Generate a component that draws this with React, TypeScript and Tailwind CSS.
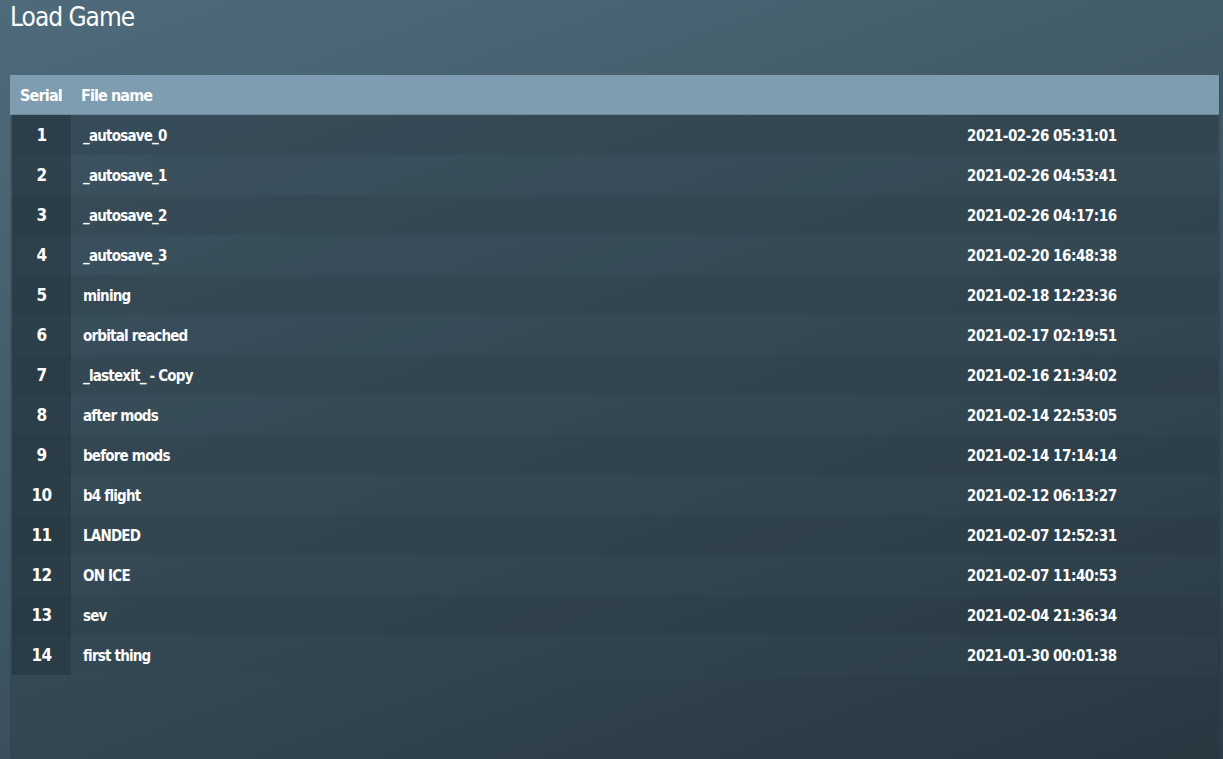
const saves = [
  ['_autosave_0', '2021-02-26 05:31:01'],
  ['_autosave_1', '2021-02-26 04:53:41'],
  ['_autosave_2', '2021-02-26 04:17:16'],
  ['_autosave_3', '2021-02-20 16:48:38'],
  ['mining', '2021-02-18 12:23:36'],
  ['orbital reached', '2021-02-17 02:19:51'],
  ['_lastexit_ - Copy', '2021-02-16 21:34:02'],
  ['after mods', '2021-02-14 22:53:05'],
  ['before mods', '2021-02-14 17:14:14'],
  ['b4 flight', '2021-02-12 06:13:27'],
  ['LANDED', '2021-02-07 12:52:31'],
  ['ON ICE', '2021-02-07 11:40:53'],
  ['sev', '2021-02-04 21:36:34'],
  ['first thing', '2021-01-30 00:01:38'],
]

const font = "font-['DejaVu_Sans_Condensed','DejaVu_Sans',sans-serif] font-stretch-condensed"

export default function App() {
  return (
    <div className={`w-[1223px] h-[759px] overflow-hidden flex flex-col bg-[linear-gradient(160deg,#4f6b7b_0%,#3f5764_50%,#2c3b45_100%)] text-white ${font}`}>
      <div className="h-[75px] px-[10px] pt-[1px]">
        <h1 className="text-[26px] leading-[32px] font-light tracking-[-1px]">Load Game</h1>
      </div>
      <div className="flex-1 mx-[10px] mr-[3px] flex flex-col bg-[#1e2c35]/25">
        <div className="h-[40px] flex items-center pt-[2px] bg-[#7f9db0] mr-[1px] border-b border-[#6c899b]">
          <div className="w-[61px] text-center text-[16px] font-bold pl-[1px] tracking-[-0.8px]">Serial</div>
          <div className="pl-[10px] text-[16px] font-bold tracking-[-0.9px]">File name</div>
        </div>
        <div className="flex flex-col px-[2px]">
          {saves.map(([name, date], i) => (
            <div key={i} className={`h-[40px] flex items-center ${i % 2 === 0 ? 'bg-[#2a3b46]/40' : 'bg-[#33464f]/30'}`}>
              <div className="w-[59px] h-full flex items-center justify-center pt-[2px] bg-[#1f2e37]/45 text-[17px] font-bold tracking-[-0.6px]">{i + 1}</div>
              <div className="pl-[12px] flex-1 pt-[2px] text-[15px] font-bold tracking-[-0.8px]">{name}</div>
              <div className="w-[251px] pt-[2px] text-[15px] font-bold tracking-[-0.45px]">{date}</div>
            </div>
          ))}
        </div>
      </div>
    </div>
  )
}
